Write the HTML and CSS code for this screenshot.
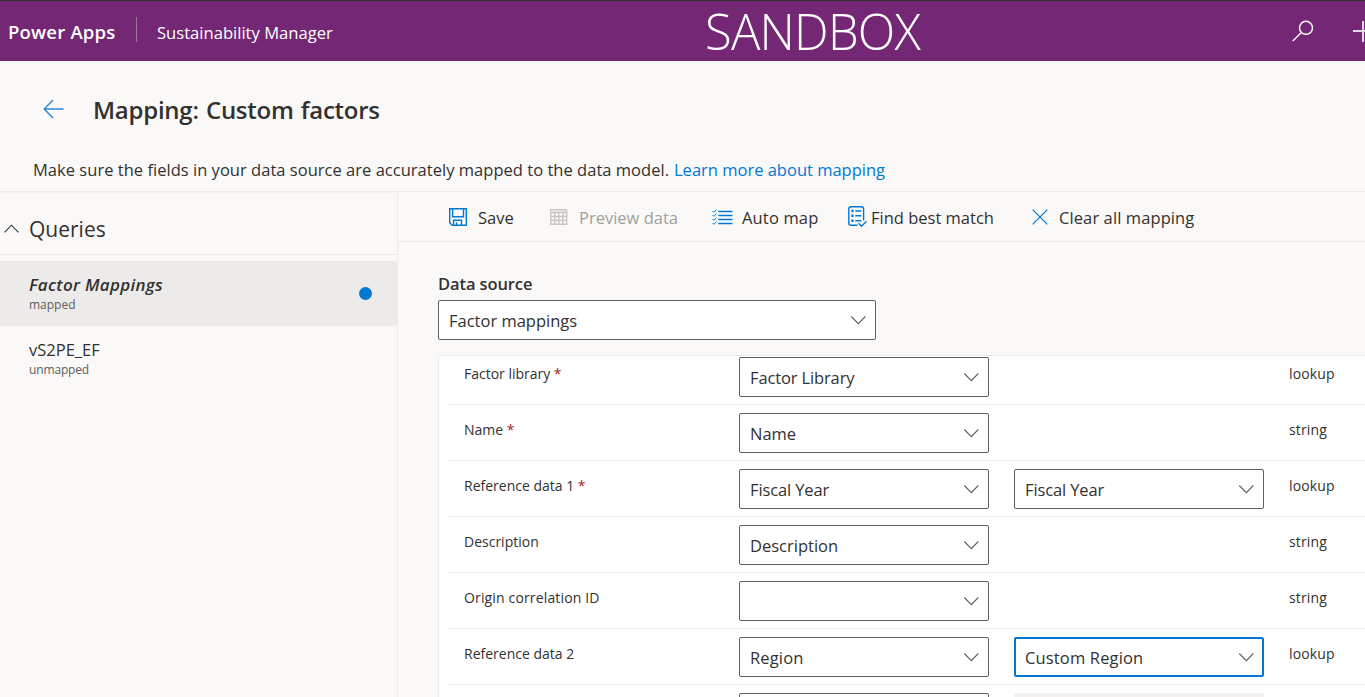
FILE: index.html
```html
<!DOCTYPE html>
<html lang="en">
<head>
<meta charset="utf-8">
<title>Mapping: Custom factors</title>
<link rel="stylesheet" href="styles.css">
</head>
<body>
<svg class="defs" aria-hidden="true">
  <symbol id="chev" viewBox="0 0 16 10"><path d="M1.3 1.5 8.3 8.6l7-7.1" fill="none" stroke="currentColor" stroke-width="1.1"/></symbol>
</svg>
<header class="topbar">
  <span class="brand">Power Apps</span>
  <span class="divider"></span>
  <span class="app">Sustainability Manager</span>
  <span class="env">SANDBOX</span>
  <svg class="search" width="22" height="22" viewBox="0 0 22 22" fill="none" stroke="#fff" stroke-width="1.4"><circle cx="14" cy="7.8" r="6.5"/><path d="M9.3 12.4.8 20.9"/></svg>
  <svg class="plus" width="21" height="21" viewBox="0 0 21 21" fill="none" stroke="#e6d9e6" stroke-width="2"><path d="M0 10h21M10 0v21"/></svg>
</header>
<section class="heading">
  <div class="title-row">
    <svg width="22" height="20" viewBox="0 0 22 20" fill="none" stroke="#2b88d8" stroke-width="1.4"><path d="M1.2 10H20.5M10 1 1.2 10l8.8 9"/></svg>
    <h1>Mapping: Custom factors</h1>
  </div>
  <p class="intro"><span class="intro-text">Make sure the fields in your data source are accurately mapped to the data model.</span><a class="intro-link">Learn more about mapping</a></p>
</section>
<div class="body">
  <aside class="sidebar">
    <div class="queries">
      <svg width="16" height="10" viewBox="0 0 16 10" fill="none" stroke="#323130" stroke-width="1.1"><path d="M1.5 8.3 8.5 1.2l7 7.1"/></svg>
      <h2>Queries</h2>
    </div>
    <div class="query selected"><div><div class="q-name">Factor Mappings</div><div class="q-state">mapped</div></div><span class="dot"></span></div>
    <div class="query"><div><div class="q-name">vS2PE_EF</div><div class="q-state">unmapped</div></div></div>
  </aside>
  <main class="content">
    <nav class="toolbar">
      <span class="cmd save">
        <svg width="18" height="18" viewBox="0 0 18 18" fill="none" stroke="#0078d4" stroke-width="1.4"><path d="M.7.7h16.6v16.6H3.2L.7 14.8z"/><path d="M3.6.7v8h10.9v-8M4.6 17.3v-5.1h7.9v5.1M7.6 17v-2.7"/></svg>
        <b>Save</b></span>
      <span class="cmd preview">
        <svg width="18" height="16" viewBox="0 0 18 16" fill="none" stroke="#c8c6c4" stroke-width="1.4"><path d="M.7.7h16v14.6H.7zM.7 3.6h16M.7 7.5h16M.7 11.4h16M4.7 3.6v11.8M8.8 3.6v11.8M12.9 3.6v11.8"/><path d="M.7 2.1h16" stroke="#e1dfdd"/></svg>
        <b>Preview data</b></span>
      <span class="cmd auto">
        <svg width="21" height="16" viewBox="0 0 21 16" fill="none" stroke="#0078d4"><path stroke-width="1.3" d="M6.3 2.5H20.5M6.3 6.5H20.5M6.3 10.5H20.5M6.3 14.5H20.5"/><path stroke-width="1" d="m.5 2 1.3 1.3L4.6.6M.5 6l1.3 1.3 2.8-2.7M.5 10l1.3 1.3 2.8-2.7M.5 14l1.3 1.3 2.8-2.7"/></svg>
        <b>Auto map</b></span>
      <span class="cmd best">
        <svg width="19" height="22" viewBox="0 0 19 22" fill="none" stroke="#0078d4" stroke-width="1.4"><path d="M9.5 19.3H3q-2.2 0-2.2-2.2V3Q.8.8 3 .8h10.4q2.2 0 2.2 2.2v11.5"/><path d="M7.3 5h6M7.3 9.8h6M7.3 14.8h6"/><path stroke-width="2.4" d="M3.3 5h2.3M3.3 9.8h2.3M3.3 14.8h2.3"/><path d="m10.5 17.3 3 3 5-5"/></svg>
        <b>Find best match</b></span>
      <span class="cmd clear">
        <svg width="16" height="16" viewBox="0 0 16 16" fill="none" stroke="#0078d4" stroke-width="1.2"><path d="m.6.6 14.8 14.8M15.4.6.6 15.4"/></svg>
        <b>Clear all mapping</b></span>
    </nav>
    <div class="source">
      <label>Data source</label>
      <div class="select source-select"><span>Factor mappings</span><svg><use href="#chev"/></svg></div>
    </div>
    <div class="table">
      <div class="row first"><span class="field"><span>Factor library</span><i>*</i></span><div class="select"><span class="tight">Factor Library</span><svg><use href="#chev"/></svg></div><span class="type">lookup</span></div>
      <div class="row"><span class="field"><span>Name</span><i>*</i></span><div class="select"><span>Name</span><svg><use href="#chev"/></svg></div><span class="type">string</span></div>
      <div class="row"><span class="field"><span>Reference data 1</span><i>*</i></span><div class="select"><span class="tight">Fiscal Year</span><svg><use href="#chev"/></svg></div><div class="select"><span class="tight">Fiscal Year</span><svg><use href="#chev"/></svg></div><span class="type">lookup</span></div>
      <div class="row"><span class="field"><span>Description</span></span><div class="select"><span>Description</span><svg><use href="#chev"/></svg></div><span class="type">string</span></div>
      <div class="row"><span class="field"><span class="origin">Origin correlation ID</span></span><div class="select"><span></span><svg><use href="#chev"/></svg></div><span class="type">string</span></div>
      <div class="row"><span class="field"><span>Reference data 2</span></span><div class="select region"><span>Region</span><svg><use href="#chev"/></svg></div><div class="select focused"><span>Custom Region</span><svg><use href="#chev"/></svg></div><span class="type">lookup</span></div>
      <div class="row"><span class="field"></span><div class="select"><span></span></div><div class="select disabled"></div></div>
    </div>
  </main>
</div>
</body>
</html>
```
FILE: styles.css
```css
* { box-sizing: border-box; }
body {
  margin: 0; width: 1365px; height: 697px; overflow: hidden;
  display: flex; flex-direction: column;
  background: #faf9f8; color: #323130;
  font: 16.5px/22px "Open Sans", "Noto Sans", sans-serif;
  white-space: nowrap;
}
.defs { display: none; }
svg { display: block; flex: none; }
h1, h2, p { margin: 0; font-weight: 400; }
b { font-weight: 400; }

.topbar {
  height: 61px; flex: none; display: flex; align-items: center;
  padding-left: 8px;
  background: #742774; border-top: 1px solid #333; color: #fff;
}
.topbar > * { flex: none; }
.brand { width: 128px; font-size: 18.5px; font-weight: 600; padding-top: 2px; letter-spacing: 0.2px; }
.divider { width: 1px; height: 25px; margin-top: -4px; background: #a276a2; }
.app { width: 550px; padding: 3px 0 0 20px; font-size: 16.6px; }
.env { width: 604px; margin-left: 18px; font-size: 49px; font-weight: 300; line-height: 60px; letter-spacing: -0.8px; }
.search { margin-left: -17px; }
.plus { margin-left: 39px; }

.heading { height: 131px; flex: none; border-bottom: 1px solid #edebe9; }
.title-row { display: flex; align-items: center; gap: 28px; padding: 31px 0 0 43px; height: 65px; }
.title-row svg { margin-top: -1px; }
h1 { font-size: 24px; line-height: 32px; padding-top: 2px; font-weight: 600; letter-spacing: -0.25px; word-spacing: 1.2px; }
.intro { display: flex; padding: 33px 0 0 33px; }
.intro-text { width: 641px; letter-spacing: 0.025px; }
.intro-link { color: #0078d4; }

.body { flex: 1; min-height: 0; display: flex; }
.sidebar { width: 398px; flex: none; border-right: 1px solid #edebe9; border-top: 1px solid #f3f2f1; }
.queries { height: 62px; margin-bottom: 6px; padding: 11px 0 0 3px; display: flex; align-items: center; gap: 10px; border-bottom: 1px solid #edebe9; }
h2 { font-size: 21px; line-height: 28px; }
.query { height: 65px; display: flex; justify-content: space-between; padding: 12px 26px 0 29px; }
.query.selected { background: #edebe9; border-radius: 0 2px 2px 0; }
.selected .q-name { font-size: 17px; font-weight: 600; font-style: italic; letter-spacing: 0.3px; }
.q-name { line-height: 24px; }
.q-state { font-size: 12px; line-height: 15px; color: #605e5c; }
.query:not(.selected) .q-state { letter-spacing: -0.15px; }
.dot { width: 13px; height: 13px; margin: 14px -0.5px 0 0; border-radius: 50%; background: #0078d4; }

.content { flex: 1; min-width: 0; overflow: hidden; }
.toolbar { height: 50px; display: flex; align-items: center; border-bottom: 1px solid #edebe9; padding-left: 51px; }
.cmd { display: flex; align-items: center; }
.cmd b { padding-top: 2px; }
.save { width: 101px; gap: 11px; }
.preview { width: 162px; gap: 11px; color: #a19f9d; }
.auto { width: 136px; gap: 9px; letter-spacing: 0.15px; }
.best { width: 183.5px; gap: 4px; }
.clear { gap: 11.5px; letter-spacing: 0.1px; }

.source { padding: 31px 0 0 40px; }
.source label { display: block; height: 27px; font-weight: 600; letter-spacing: -0.1px; }
.select {
  width: 250px; height: 40px; flex: none; display: flex; justify-content: space-between; align-items: center;
  padding: 1px 9px 0 10px; background: #fff; border: 1px solid #605e5c; border-radius: 2px;
}
.select svg { width: 16px; height: 10px; margin-top: -2px; color: #605e5c; }
.source-select { width: 438px; }
.select .tight { letter-spacing: -0.13px; }
.select.region { letter-spacing: 0.15px; }
.select.focused { border: 2px solid #0078d4; padding: 1px 8px 0 9px; letter-spacing: 0.15px; }
.select.disabled { background: #f3f2f1; border-color: #f3f2f1; }

.table { margin: 15px 0 0 40px; padding-left: 10px; border: 1px solid #edebe9; border-width: 1px 0 0 1px; background: #fff; }
.row { height: 56px; display: grid; grid-template-columns: 275px 275px 275px 76px; align-items: start; padding: 8px 0 0 15px; border-bottom: 1px solid #edebe9; }
.row.first { height: 49px; padding-top: 1px; }
.field { display: flex; gap: 3.5px; font-size: 14px; line-height: 20px; padding-top: 7px; }
.field i { color: #a4262c; font-style: normal; }
.origin { letter-spacing: 0.15px; }
.type { grid-column: 4; font-size: 14px; line-height: 20px; padding-top: 7px; letter-spacing: 0.15px; }
```
